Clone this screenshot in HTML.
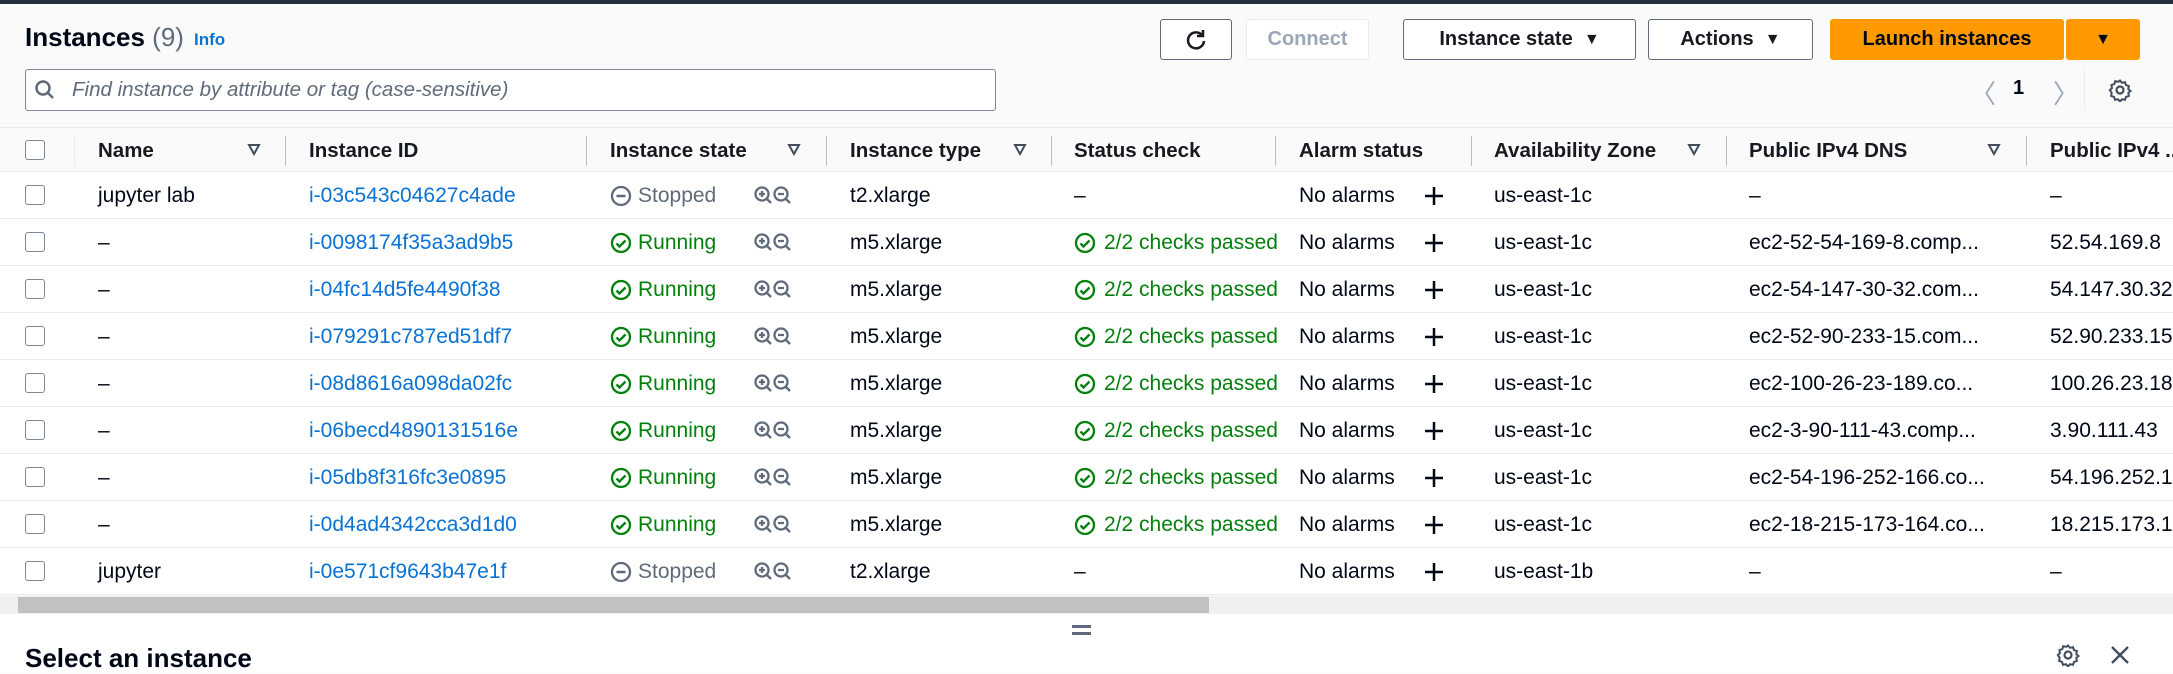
<!DOCTYPE html>
<html><head><meta charset="utf-8"><style>
*{box-sizing:border-box;margin:0;padding:0}
body{width:2173px;height:673px;overflow:hidden;background:#fafafa;font-family:"Liberation Sans",sans-serif;color:#000716;position:relative}
.a{position:absolute;white-space:nowrap}
.topbar{left:0;top:0;width:2173px;height:4px;background:#232f3e}
.btn{position:absolute;top:19px;height:41px;border:1.5px solid #5f6b7a;border-radius:3px;background:#fff;font-weight:bold;font-size:20px;display:flex;align-items:center;justify-content:center;color:#16191f}
.hdr{position:absolute;left:0;top:127px;width:2173px;height:45px;background:#fafafa;border-top:1px solid #e9ebed;border-bottom:1px solid #e9ebed}
.hdr .a{top:11px;font-weight:bold;font-size:20.5px;color:#16191f}
.sep{position:absolute;top:8px;width:1px;height:30px;background:#b6bec9}
.tri{position:absolute;top:14px;width:14px;height:14px}
.row{position:absolute;left:0;width:2173px;height:47px;background:#fff;border-bottom:1px solid #e9ebed;font-size:21px}
.row .a{top:12px}
.cb{position:absolute;left:25px;width:20px;height:20px;border:1.5px solid #7d8998;border-radius:3px;background:#fff}
.row .cb{top:13px}
.lk{color:#0972d3}
.g{color:#037f0c}
.gr{color:#5f6b7a}
</style></head><body>
<div class="a topbar"></div>
<div class="a" style="left:25px;top:22px;font-size:26px;font-weight:bold;color:#000716">Instances <span style="font-weight:normal;color:#5f6b7a">(9)</span></div>
<div class="a" style="left:194px;top:30px;font-size:17px;font-weight:bold;color:#0972d3">Info</div>
<div class="a" style="left:25px;top:69px;width:971px;height:42px;border:1.5px solid #7d8998;border-radius:3px;background:#fff"></div>
<svg class="a" style="left:34px;top:79px" width="22" height="22" viewBox="0 0 22 22"><circle cx="9" cy="9" r="6.5" fill="none" stroke="#5f6b7a" stroke-width="2.5"/><path d="M14 14l5 5" stroke="#5f6b7a" stroke-width="2.5"/></svg>
<div class="a" style="left:72px;top:78px;font-size:20.5px;font-style:italic;color:#5f6b7a">Find instance by attribute or tag (case-sensitive)</div>

<div class="btn" style="left:1160px;width:72px"><svg width="26" height="26" viewBox="0 0 26 26"><path d="M19 8A8 8 0 1 0 21 14" fill="none" stroke="#16191f" stroke-width="2.5"/><path d="M20 3v6h-6" fill="none" stroke="#16191f" stroke-width="2.5"/></svg></div>
<div class="btn" style="left:1246px;width:123px;border-color:#e9ebed;color:#9ba7b6">Connect</div>
<div class="btn" style="left:1403px;width:233px">Instance state&nbsp;&nbsp;<span style="font-size:16px">▼</span></div>
<div class="btn" style="left:1648px;width:165px">Actions&nbsp;&nbsp;<span style="font-size:16px">▼</span></div>
<div class="btn" style="left:1830px;width:234px;background:#ff9900;border-color:#ff9900;color:#000716">Launch instances</div>
<div class="btn" style="left:2066px;width:74px;background:#ff9900;border-color:#ff9900;color:#000716;font-size:16px">▼</div>

<div class="a" style="left:1970px;top:74px;font-size:26px;color:#9ba7b6">〈</div>
<div class="a" style="left:2013px;top:77px;font-size:20px;font-weight:bold">1</div>
<div class="a" style="left:2053px;top:74px;font-size:26px;color:#9ba7b6;transform:scaleX(-1)">〈</div>
<div class="a" style="left:2084px;top:70px;width:1px;height:40px;background:#e9ebed"></div>
<svg class="a" style="left:2108px;top:78px" width="24" height="24" viewBox="0 0 24 24"><circle cx="12" cy="12" r="3.5" fill="none" stroke="#414d5c" stroke-width="2.2"/><path d="M12 2.5l2 2.3 3-.6 1 2.9 2.9 1-.6 3 2.2 1.9-2.2 1.9.6 3-2.9 1-1 2.9-3-.6-2 2.3-2-2.3-3 .6-1-2.9-2.9-1 .6-3L1.8 12l2.2-1.9-.6-3 2.9-1 1-2.9 3 .6z" fill="none" stroke="#414d5c" stroke-width="2"/></svg>

<div class="hdr">
<div class="cb" style="top:12px"></div>
<div class="a" style="left:98px">Name</div>
<div class="a" style="left:309px">Instance ID</div>
<div class="a" style="left:610px">Instance state</div>
<div class="a" style="left:850px">Instance type</div>
<div class="a" style="left:1074px">Status check</div>
<div class="a" style="left:1299px">Alarm status</div>
<div class="a" style="left:1494px">Availability Zone</div>
<div class="a" style="left:1749px">Public IPv4 DNS</div>
<div class="a" style="left:2050px">Public IPv4 ...</div>
<div class="sep" style="left:74px;background:#e9ebed"></div>
<div class="sep" style="left:285px"></div><div class="sep" style="left:586px"></div><div class="sep" style="left:826px"></div><div class="sep" style="left:1051px"></div><div class="sep" style="left:1275px"></div><div class="sep" style="left:1471px"></div><div class="sep" style="left:1726px"></div><div class="sep" style="left:2026px"></div>
<svg class="tri" style="left:247px" viewBox="0 0 14 14"><path d="M2 3h10L7 12z" fill="none" stroke="#414d5c" stroke-width="2"/></svg>
<svg class="tri" style="left:787px" viewBox="0 0 14 14"><path d="M2 3h10L7 12z" fill="none" stroke="#414d5c" stroke-width="2"/></svg>
<svg class="tri" style="left:1013px" viewBox="0 0 14 14"><path d="M2 3h10L7 12z" fill="none" stroke="#414d5c" stroke-width="2"/></svg>
<svg class="tri" style="left:1687px" viewBox="0 0 14 14"><path d="M2 3h10L7 12z" fill="none" stroke="#414d5c" stroke-width="2"/></svg>
<svg class="tri" style="left:1987px" viewBox="0 0 14 14"><path d="M2 3h10L7 12z" fill="none" stroke="#414d5c" stroke-width="2"/></svg>
</div>

<svg width="0" height="0" style="position:absolute"><defs>
<symbol id="zz" viewBox="0 0 40 22"><circle cx="9" cy="9" r="6.5" fill="none" stroke="#5f6b7a" stroke-width="2.3"/><path d="M6 9h6M9 6v6M14 14l4 4" stroke="#5f6b7a" stroke-width="2.3"/><circle cx="28" cy="9" r="6.5" fill="none" stroke="#5f6b7a" stroke-width="2.3"/><path d="M25 9h6M33 14l4 4" stroke="#5f6b7a" stroke-width="2.3"/></symbol>
<symbol id="ok" viewBox="0 0 22 22"><circle cx="11" cy="11" r="9" fill="none" stroke="#037f0c" stroke-width="2.3"/><path d="M6.5 11.5l3 3 6-6" fill="none" stroke="#037f0c" stroke-width="2.3"/></symbol>
<symbol id="st" viewBox="0 0 22 22"><circle cx="11" cy="11" r="9" fill="none" stroke="#5f6b7a" stroke-width="2.3"/><path d="M6.5 11h9" stroke="#5f6b7a" stroke-width="2.5"/></symbol>
<symbol id="pl" viewBox="0 0 22 22"><path d="M11 2v18M2 11h18" stroke="#000716" stroke-width="2.5"/></symbol>
</defs></svg>

<div class="row" style="top:172px"><div class="cb"></div><div class="a" style="left:98px">jupyter lab</div><div class="a lk" style="left:309px">i-03c543c04627c4ade</div><svg class="a" style="left:610px;top:13px" width="22" height="22"><use href="#st"/></svg><div class="a gr" style="left:638px">Stopped</div><svg class="a" style="left:753px;top:13px" width="40" height="22"><use href="#zz"/></svg><div class="a" style="left:850px">t2.xlarge</div><div class="a" style="left:1074px">–</div><div class="a" style="left:1299px">No alarms</div><svg class="a" style="left:1423px;top:13px" width="22" height="22"><use href="#pl"/></svg><div class="a" style="left:1494px">us-east-1c</div><div class="a" style="left:1749px">–</div><div class="a" style="left:2050px">–</div></div>

<div class="row" style="top:219px"><div class="cb"></div><div class="a" style="left:98px">–</div><div class="a lk" style="left:309px">i-0098174f35a3ad9b5</div><svg class="a" style="left:610px;top:13px" width="22" height="22"><use href="#ok"/></svg><div class="a g" style="left:638px">Running</div><svg class="a" style="left:753px;top:13px" width="40" height="22"><use href="#zz"/></svg><div class="a" style="left:850px">m5.xlarge</div><svg class="a" style="left:1074px;top:13px" width="22" height="22"><use href="#ok"/></svg><div class="a g" style="left:1104px">2/2 checks passed</div><div class="a" style="left:1299px">No alarms</div><svg class="a" style="left:1423px;top:13px" width="22" height="22"><use href="#pl"/></svg><div class="a" style="left:1494px">us-east-1c</div><div class="a" style="left:1749px">ec2-52-54-169-8.comp...</div><div class="a" style="left:2050px">52.54.169.8</div></div>

<div class="row" style="top:266px"><div class="cb"></div><div class="a" style="left:98px">–</div><div class="a lk" style="left:309px">i-04fc14d5fe4490f38</div><svg class="a" style="left:610px;top:13px" width="22" height="22"><use href="#ok"/></svg><div class="a g" style="left:638px">Running</div><svg class="a" style="left:753px;top:13px" width="40" height="22"><use href="#zz"/></svg><div class="a" style="left:850px">m5.xlarge</div><svg class="a" style="left:1074px;top:13px" width="22" height="22"><use href="#ok"/></svg><div class="a g" style="left:1104px">2/2 checks passed</div><div class="a" style="left:1299px">No alarms</div><svg class="a" style="left:1423px;top:13px" width="22" height="22"><use href="#pl"/></svg><div class="a" style="left:1494px">us-east-1c</div><div class="a" style="left:1749px">ec2-54-147-30-32.com...</div><div class="a" style="left:2050px">54.147.30.32</div></div>

<div class="row" style="top:313px"><div class="cb"></div><div class="a" style="left:98px">–</div><div class="a lk" style="left:309px">i-079291c787ed51df7</div><svg class="a" style="left:610px;top:13px" width="22" height="22"><use href="#ok"/></svg><div class="a g" style="left:638px">Running</div><svg class="a" style="left:753px;top:13px" width="40" height="22"><use href="#zz"/></svg><div class="a" style="left:850px">m5.xlarge</div><svg class="a" style="left:1074px;top:13px" width="22" height="22"><use href="#ok"/></svg><div class="a g" style="left:1104px">2/2 checks passed</div><div class="a" style="left:1299px">No alarms</div><svg class="a" style="left:1423px;top:13px" width="22" height="22"><use href="#pl"/></svg><div class="a" style="left:1494px">us-east-1c</div><div class="a" style="left:1749px">ec2-52-90-233-15.com...</div><div class="a" style="left:2050px">52.90.233.15</div></div>

<div class="row" style="top:360px"><div class="cb"></div><div class="a" style="left:98px">–</div><div class="a lk" style="left:309px">i-08d8616a098da02fc</div><svg class="a" style="left:610px;top:13px" width="22" height="22"><use href="#ok"/></svg><div class="a g" style="left:638px">Running</div><svg class="a" style="left:753px;top:13px" width="40" height="22"><use href="#zz"/></svg><div class="a" style="left:850px">m5.xlarge</div><svg class="a" style="left:1074px;top:13px" width="22" height="22"><use href="#ok"/></svg><div class="a g" style="left:1104px">2/2 checks passed</div><div class="a" style="left:1299px">No alarms</div><svg class="a" style="left:1423px;top:13px" width="22" height="22"><use href="#pl"/></svg><div class="a" style="left:1494px">us-east-1c</div><div class="a" style="left:1749px">ec2-100-26-23-189.co...</div><div class="a" style="left:2050px">100.26.23.18</div></div>

<div class="row" style="top:407px"><div class="cb"></div><div class="a" style="left:98px">–</div><div class="a lk" style="left:309px">i-06becd4890131516e</div><svg class="a" style="left:610px;top:13px" width="22" height="22"><use href="#ok"/></svg><div class="a g" style="left:638px">Running</div><svg class="a" style="left:753px;top:13px" width="40" height="22"><use href="#zz"/></svg><div class="a" style="left:850px">m5.xlarge</div><svg class="a" style="left:1074px;top:13px" width="22" height="22"><use href="#ok"/></svg><div class="a g" style="left:1104px">2/2 checks passed</div><div class="a" style="left:1299px">No alarms</div><svg class="a" style="left:1423px;top:13px" width="22" height="22"><use href="#pl"/></svg><div class="a" style="left:1494px">us-east-1c</div><div class="a" style="left:1749px">ec2-3-90-111-43.comp...</div><div class="a" style="left:2050px">3.90.111.43</div></div>

<div class="row" style="top:454px"><div class="cb"></div><div class="a" style="left:98px">–</div><div class="a lk" style="left:309px">i-05db8f316fc3e0895</div><svg class="a" style="left:610px;top:13px" width="22" height="22"><use href="#ok"/></svg><div class="a g" style="left:638px">Running</div><svg class="a" style="left:753px;top:13px" width="40" height="22"><use href="#zz"/></svg><div class="a" style="left:850px">m5.xlarge</div><svg class="a" style="left:1074px;top:13px" width="22" height="22"><use href="#ok"/></svg><div class="a g" style="left:1104px">2/2 checks passed</div><div class="a" style="left:1299px">No alarms</div><svg class="a" style="left:1423px;top:13px" width="22" height="22"><use href="#pl"/></svg><div class="a" style="left:1494px">us-east-1c</div><div class="a" style="left:1749px">ec2-54-196-252-166.co...</div><div class="a" style="left:2050px">54.196.252.1</div></div>

<div class="row" style="top:501px"><div class="cb"></div><div class="a" style="left:98px">–</div><div class="a lk" style="left:309px">i-0d4ad4342cca3d1d0</div><svg class="a" style="left:610px;top:13px" width="22" height="22"><use href="#ok"/></svg><div class="a g" style="left:638px">Running</div><svg class="a" style="left:753px;top:13px" width="40" height="22"><use href="#zz"/></svg><div class="a" style="left:850px">m5.xlarge</div><svg class="a" style="left:1074px;top:13px" width="22" height="22"><use href="#ok"/></svg><div class="a g" style="left:1104px">2/2 checks passed</div><div class="a" style="left:1299px">No alarms</div><svg class="a" style="left:1423px;top:13px" width="22" height="22"><use href="#pl"/></svg><div class="a" style="left:1494px">us-east-1c</div><div class="a" style="left:1749px">ec2-18-215-173-164.co...</div><div class="a" style="left:2050px">18.215.173.1</div></div>

<div class="row" style="top:548px"><div class="cb"></div><div class="a" style="left:98px">jupyter</div><div class="a lk" style="left:309px">i-0e571cf9643b47e1f</div><svg class="a" style="left:610px;top:13px" width="22" height="22"><use href="#st"/></svg><div class="a gr" style="left:638px">Stopped</div><svg class="a" style="left:753px;top:13px" width="40" height="22"><use href="#zz"/></svg><div class="a" style="left:850px">t2.xlarge</div><div class="a" style="left:1074px">–</div><div class="a" style="left:1299px">No alarms</div><svg class="a" style="left:1423px;top:13px" width="22" height="22"><use href="#pl"/></svg><div class="a" style="left:1494px">us-east-1b</div><div class="a" style="left:1749px">–</div><div class="a" style="left:2050px">–</div></div>

<div class="a" style="left:0;top:596px;width:2173px;height:18px;background:#f0f0f0"></div>
<div class="a" style="left:18px;top:597px;width:1191px;height:16px;background:#c1c1c1"></div>
<div class="a" style="left:0;top:614px;width:2173px;height:59px;background:#fff"></div>
<div class="a" style="left:1072px;top:625px;width:19px;height:3px;background:#5f6b7a"></div>
<div class="a" style="left:1072px;top:632px;width:19px;height:3px;background:#5f6b7a"></div>
<div class="a" style="left:25px;top:643px;font-size:26px;font-weight:bold">Select an instance</div>
<svg class="a" style="left:2056px;top:643px" width="24" height="24" viewBox="0 0 24 24"><circle cx="12" cy="12" r="3.5" fill="none" stroke="#414d5c" stroke-width="2.2"/><path d="M12 2.5l2 2.3 3-.6 1 2.9 2.9 1-.6 3 2.2 1.9-2.2 1.9.6 3-2.9 1-1 2.9-3-.6-2 2.3-2-2.3-3 .6-1-2.9-2.9-1 .6-3L1.8 12l2.2-1.9-.6-3 2.9-1 1-2.9 3 .6z" fill="none" stroke="#414d5c" stroke-width="2"/></svg>
<svg class="a" style="left:2110px;top:645px" width="20" height="20" viewBox="0 0 20 20"><path d="M2 2l16 16M18 2L2 18" stroke="#414d5c" stroke-width="2.3"/></svg>
</body></html>
